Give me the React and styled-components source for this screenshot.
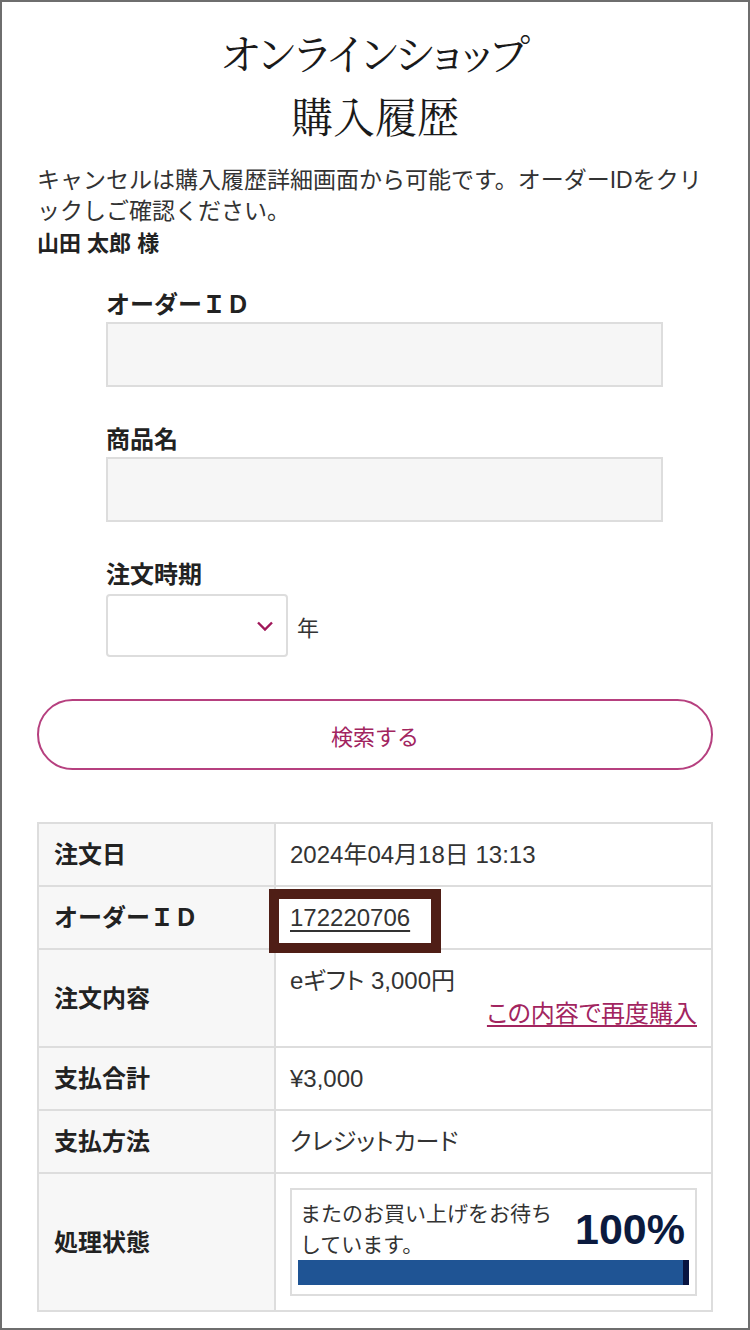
import React from 'react';
import styled, { createGlobalStyle } from 'styled-components';

const GlobalStyle = createGlobalStyle`
  html, body { margin: 0; padding: 0; background: #fff; }
  body {
    font-family: "Liberation Sans", "Noto Sans CJK JP", sans-serif;
    color: #333;
  }
  * { box-sizing: border-box; }
`;

const Frame = styled.div`
  width: 750px;
  min-height: 1330px;
  border: 2px solid #6e6e6e;
  padding: 19px 35px 0;
`;

const Title = styled.h1`
  margin: 0;
  text-align: center;
  font-family: "Noto Serif CJK JP", "Liberation Serif", serif;
  font-weight: 400;
  font-size: 42px;
  line-height: 63px;
  color: #1a1a1a;
  font-feature-settings: "palt";
`;

const Lead = styled.p`
  margin: 18px 0 0;
  font-size: 23px;
  line-height: 31px;
  color: #333;
`;

const Customer = styled.p`
  margin: 0;
  font-size: 22px;
  line-height: 33px;
  font-weight: 700;
  color: #222;
`;

const SearchForm = styled.form`
  margin: 28px 0 0 69px;
  width: 557px;
  display: flex;
  flex-direction: column;
  gap: 36px;
`;

const Field = styled.div`
  display: flex;
  flex-direction: column;
`;

const FieldLabel = styled.label`
  font-size: 24px;
  line-height: 34px;
  font-weight: 700;
  color: #222;
  margin-bottom: ${(p) => p.$gap || 0}px;
`;

const TextInput = styled.input`
  width: 100%;
  height: 65px;
  background: #f6f6f6;
  border: 2px solid #ddd;
  border-radius: 0;
  outline: none;
  font-size: 22px;
  font-family: inherit;
`;

const SelectRow = styled.div`
  display: flex;
  align-items: center;
  gap: 9px;
`;

const SelectBox = styled.div`
  position: relative;
  width: 182px;
  height: 63px;
  border: 2px solid #ddd;
  border-radius: 4px;
  background: #fff;
`;

const Chevron = styled.svg`
  position: absolute;
  right: 12px;
  top: 50%;
  transform: translateY(-50%);
`;

const Unit = styled.span`
  font-size: 22px;
  color: #333;
`;

const SearchButton = styled.button`
  display: block;
  width: 100%;
  height: 71px;
  margin-top: 42px;
  border: 2px solid #b6407f;
  border-radius: 36px;
  background: #fff;
  color: #a2255f;
  font-size: 22px;
  font-family: inherit;
  cursor: pointer;
`;

const Table = styled.table`
  width: 676px;
  margin-top: 52px;
  border-collapse: collapse;
  table-layout: fixed;
`;

const Head = styled.th`
  width: 237px;
  background: #f7f7f7;
  border: 2px solid #ddd;
  text-align: left;
  vertical-align: middle;
  padding: 14px 15px;
  font-size: 24px;
  line-height: 33px;
  font-weight: 700;
  color: #222;
`;

const Cell = styled.td`
  border: 2px solid #ddd;
  padding: ${(p) => (p.$top ? '14px 14px 16px' : '14px')};
  vertical-align: ${(p) => (p.$top ? 'top' : 'middle')};
  font-size: 24px;
  line-height: 33px;
  color: #333;
  font-feature-settings: "palt";
`;

const IdLink = styled.a`
  position: relative;
  color: #333;
  text-decoration: underline;
  text-underline-offset: 4px;
`;

const Highlight = styled.span`
  position: absolute;
  left: -21px;
  top: -15px;
  width: 172px;
  height: 64px;
  border: 10px solid #4f1e16;
  pointer-events: none;
`;

const ReorderLine = styled.div`
  text-align: right;
`;

const ReorderLink = styled.a`
  color: #a2255f;
  text-decoration: underline;
  text-underline-offset: 3px;
`;

const StatusBox = styled.div`
  border: 2px solid #ddd;
  padding: 8px 6px 9px;
  font-feature-settings: normal;
`;

const StatusTop = styled.div`
  display: flex;
  align-items: center;
  justify-content: space-between;
  padding: 0 4px 0 2px;
`;

const StatusText = styled.div`
  width: 266px;
  font-size: 21px;
  line-height: 31px;
  color: #333;
`;

const Percent = styled.div`
  font-size: 43px;
  line-height: 1;
  font-weight: 700;
  color: #0b1a3e;
`;

const BarTrack = styled.div`
  height: 25px;
  background: #e8e8e8;
`;

const BarFill = styled.div`
  height: 100%;
  background: #1f5494;
  border-right: 6px solid #081440;
`;

export default function App() {
  const progress = 100;
  return (
    <>
      <GlobalStyle />
      <Frame>
        <Title>
          オンラインショップ
          <br />
          購入履歴
        </Title>
        <Lead>キャンセルは購入履歴詳細画面から可能です。オーダーIDをクリックしご確認ください。</Lead>
        <Customer>山田 太郎 様</Customer>

        <SearchForm onSubmit={(e) => e.preventDefault()}>
          <Field>
            <FieldLabel>オーダーＩＤ</FieldLabel>
            <TextInput type="text" />
          </Field>
          <Field>
            <FieldLabel>商品名</FieldLabel>
            <TextInput type="text" />
          </Field>
          <Field>
            <FieldLabel $gap={2}>注文時期</FieldLabel>
            <SelectRow>
              <SelectBox>
                <Chevron width="18" height="11" viewBox="0 0 18 11">
                  <path d="M2 2 L9 9 L16 2" fill="none" stroke="#a0185a" strokeWidth="2.4" />
                </Chevron>
              </SelectBox>
              <Unit>年</Unit>
            </SelectRow>
          </Field>
        </SearchForm>

        <SearchButton type="button">検索する</SearchButton>

        <Table>
          <tbody>
            <tr>
              <Head>注文日</Head>
              <Cell>2024年04月18日 13:13</Cell>
            </tr>
            <tr>
              <Head>オーダーＩＤ</Head>
              <Cell>
                <IdLink href="#">
                  172220706
                  <Highlight />
                </IdLink>
              </Cell>
            </tr>
            <tr>
              <Head>注文内容</Head>
              <Cell $top>
                <div>eギフト 3,000円</div>
                <ReorderLine>
                  <ReorderLink href="#">この内容で再度購入</ReorderLink>
                </ReorderLine>
              </Cell>
            </tr>
            <tr>
              <Head>支払合計</Head>
              <Cell>¥3,000</Cell>
            </tr>
            <tr>
              <Head>支払方法</Head>
              <Cell>クレジットカード</Cell>
            </tr>
            <tr>
              <Head>処理状態</Head>
              <Cell>
                <StatusBox>
                  <StatusTop>
                    <StatusText>またのお買い上げをお待ちしています。</StatusText>
                    <Percent>{progress}%</Percent>
                  </StatusTop>
                  <BarTrack>
                    <BarFill style={{ width: `${progress}%` }} />
                  </BarTrack>
                </StatusBox>
              </Cell>
            </tr>
          </tbody>
        </Table>
      </Frame>
    </>
  );
}
